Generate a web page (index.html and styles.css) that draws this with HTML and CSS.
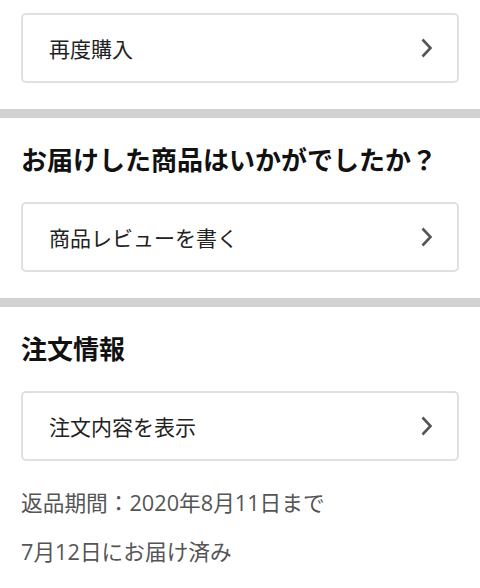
FILE: index.html
```html
<!DOCTYPE html>
<html lang="ja">
<head>
    <meta charset="UTF-8">
    <meta name="viewport" content="width=device-width, initial-scale=1.0">
    <title>注文の詳細</title>
    <link rel="stylesheet" href="styles.css">
</head>
<body>
    <div class="section first">
        <a class="link-card" href="#">
            <span>再度購入</span>
            <svg class="chevron" width="14" height="20" viewBox="0 0 14 20"><path d="M3.5 1.5 L11.5 10 L3.5 18.5" /></svg>
        </a>
    </div>

    <div class="divider"></div>

    <div class="section">
        <h2 class="section-title">お届けした商品はいかがでしたか？</h2>
        <a class="link-card" href="#">
            <span>商品レビューを書く</span>
            <svg class="chevron" width="14" height="20" viewBox="0 0 14 20"><path d="M3.5 1.5 L11.5 10 L3.5 18.5" /></svg>
        </a>
    </div>

    <div class="divider"></div>

    <div class="section">
        <h2 class="section-title">注文情報</h2>
        <a class="link-card" href="#">
            <span>注文内容を表示</span>
            <svg class="chevron" width="14" height="20" viewBox="0 0 14 20"><path d="M3.5 1.5 L11.5 10 L3.5 18.5" /></svg>
        </a>
        <div class="order-info">
            <p>返品期間：2020年8月11日まで</p>
            <p>7月12日にお届け済み</p>
        </div>
    </div>
</body>
</html>
```

FILE: styles.css
```css
body {
    margin: 0;
    background-color: #fff;
    font-family: "Open Sans", "Noto Sans CJK JP", sans-serif;
    color: #222;
}
.section {
    padding: 0 21px 26px;
}
.section.first {
    padding-top: 13px;
}
.section-title {
    margin: 0;
    padding: 24px 0;
    line-height: 36px;
    font-size: 26px;
    font-weight: bold;
    color: #111;
}
.link-card {
    display: flex;
    align-items: center;
    justify-content: space-between;
    height: 70px;
    box-sizing: border-box;
    padding: 0 24px 0 26px;
    border: 2px solid #e0e0e0;
    border-radius: 5px;
    color: #222;
    text-decoration: none;
    font-size: 21px;
}
.chevron path {
    fill: none;
    stroke: #555;
    stroke-width: 2.6;
}
.divider {
    height: 9px;
    background-color: #d2d2d2;
}
.order-info {
    padding-top: 17px;
}
.order-info p {
    margin: 0;
    line-height: 49px;
    font-size: 21.7px;
    color: #555;
}
```
